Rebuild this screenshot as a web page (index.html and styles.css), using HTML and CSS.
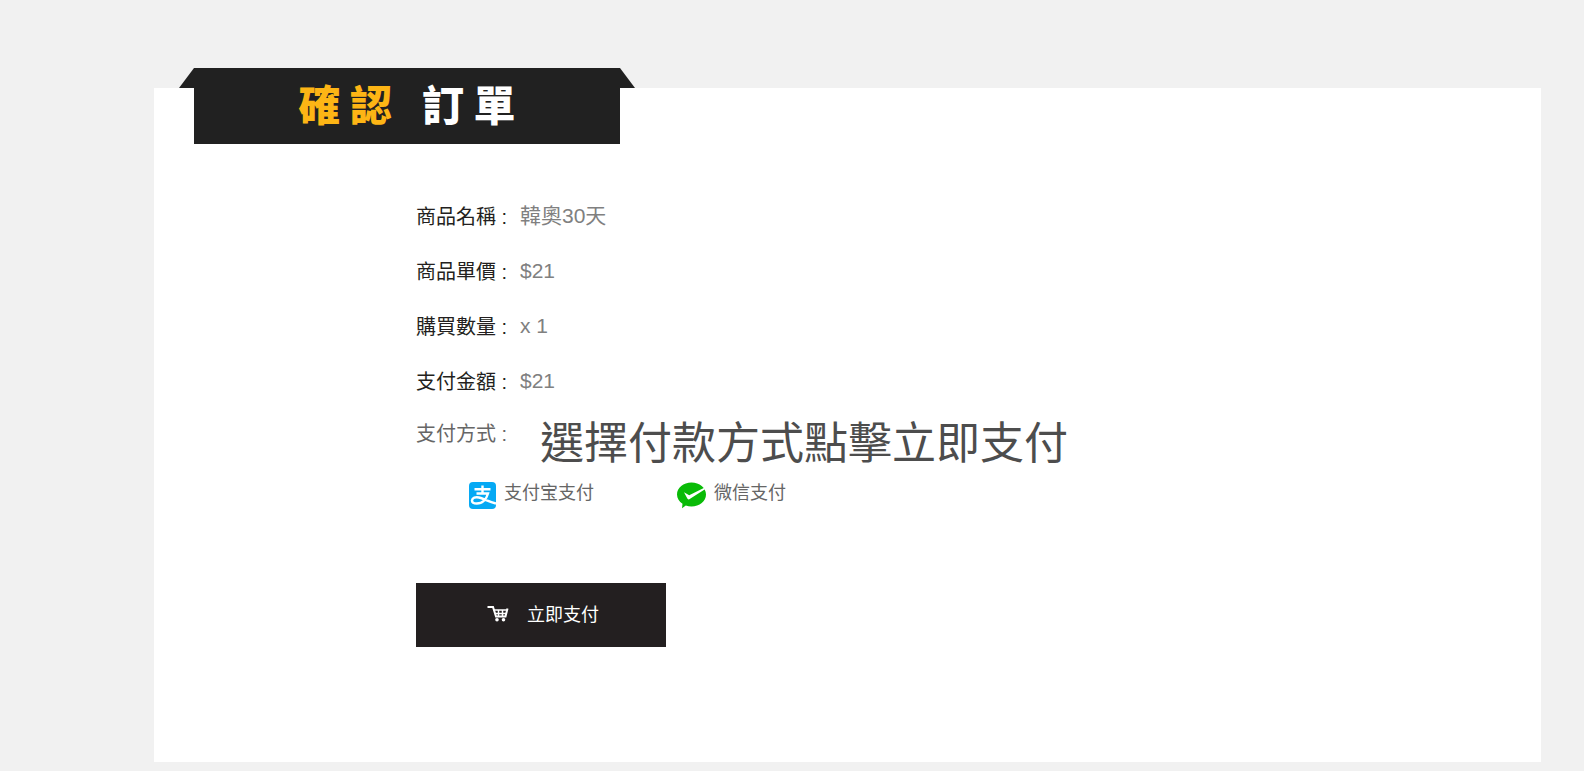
FILE: index.html
```
<!DOCTYPE html>
<html lang="zh-Hant">
<head>
    <meta charset="UTF-8">
    <meta name="viewport" content="width=device-width, initial-scale=1.0">
    <title>確認訂單</title>
    <link rel="stylesheet" href="styles.css">
</head>
<body>
    <main class="order">
        <h1 class="order_title"><span class="order_title--gold">確 認</span><span>訂 單</span></h1>

        <form class="order_form">
            <dl class="order_info">
                <div class="order_row"><dt>商品名稱 :</dt><dd>韓奧30天</dd></div>
                <div class="order_row"><dt>商品單價 :</dt><dd>$21</dd></div>
                <div class="order_row"><dt>購買數量 :</dt><dd>x 1</dd></div>
                <div class="order_row"><dt>支付金額 :</dt><dd>$21</dd></div>
            </dl>

            <div class="pay_head">
                <span class="pay_label" id="pay_label">支付方式 :</span>
                <p class="pay_tip">選擇付款方式點擊立即支付</p>
            </div>

            <div class="pay_list" role="radiogroup" aria-labelledby="pay_label">
                <label class="pay_item" for="alipay">
                    <input type="radio" name="pay" id="alipay" value="alipay">
                    <svg class="pay_icon" viewBox="0 0 27 27" aria-hidden="true">
                        <rect width="27" height="27" rx="4" fill="#06a9f4"/>
                        <path d="M5.500 7.200h16M13.500 3.500v8M7.500 11.500h11.500C17.500 17 13.500 21.500 7.800 21.500C4.500 21.500 2.800 20.300 3 18.300C3.300 15.800 6.300 14.800 10 15.500C14 16.300 19 19.300 27 21.500" fill="none" stroke="#fff" stroke-width="2.400"/>
                    </svg>
                    <span lang="zh-Hans">支付宝支付</span>
                </label>
                <label class="pay_item" for="wechat">
                    <input type="radio" name="pay" id="wechat" value="wechat">
                    <svg class="pay_icon pay_icon--wide" viewBox="0 0 29 27" aria-hidden="true">
                        <path d="M14.500 .5C22.500 .5 29 5.800 29 12.500S22.500 24.500 14.500 24.500C12.500 24.500 10.500 24.200 8.800 23.600L5 26.300L5.500 21.800C2.200 19.600 0 16.300 0 12.500C0 5.800 6.500 .5 14.500 .5z" fill="#09bb07"/>
                        <path d="M7 10.300L12.200 13.200L27.300 5.700L28 7.300L12.300 17.200Q11 17.800 10.300 16.600z" fill="#fff"/>
                    </svg>
                    <span lang="zh-Hans">微信支付</span>
                </label>
            </div>

            <button class="pay_btn" type="button">
                <svg class="pay_cart" viewBox="0 0 22 17" aria-hidden="true">
                    <path d="M.5 2h5.500l3 9.500h9.500l2-8" fill="none" stroke="#fff" stroke-width="2"/>
                    <path d="M6.500 5h14M8 8.500h12M11.500 5v6M15.500 5v6" fill="none" stroke="#fff" stroke-width="1.500"/>
                    <circle cx="10" cy="14.800" r="1.800" fill="#fff"/>
                    <circle cx="16.500" cy="14.800" r="1.800" fill="#fff"/>
                </svg>
                <span>立即支付</span>
            </button>
        </form>
    </main>
</body>
</html>
```

FILE: styles.css
```
*{
    box-sizing: border-box;
    margin: 0;
    padding: 0;
}

body{
    background-color: #f1f1f1;
    font-family: "Liberation Sans", "Noto Sans CJK TC", sans-serif;
    color: #666;
}

.order{
    display: flow-root;
    margin: 88px 43px 9px 154px;
    padding: 0 40px 115px;
    background-color: #fff;
}

.order_title{
    position: relative;
    display: flex;
    justify-content: center;
    gap: 30px;
    max-width: 426px;
    height: 76px;
    margin-top: -20px;
    background-color: #212121;
    color: #fff;
    font-family: "Noto Sans CJK TC", sans-serif;
    font-size: 42px;
    font-weight: 900;
    line-height: 70px;
}

/* folded corners of the ribbon */
.order_title::before,
.order_title::after{
    content: "";
    position: absolute;
    top: 0;
    width: 15px;
    height: 20px;
    background-color: #212121;
}

.order_title::before{
    right: 100%;
    clip-path: polygon(100% 0, 100% 100%, 0 100%);
}

.order_title::after{
    left: 100%;
    clip-path: polygon(0 0, 100% 100%, 0 100%);
}

.order_title--gold{
    color: #fdb515;
}

.order_form{
    padding: 44px 0 0 222px;
}

.order_row{
    display: flex;
    align-items: center;
    height: 55px;
}

.order_row dt,
.pay_label{
    width: 104px;
    flex-shrink: 0;
    font-size: 20px;
}

.order_row dt{
    color: #231f20;
}

.order_row dd{
    font-size: 21px;
    line-height: 24px;
    color: #808080;
}

.pay_head{
    display: flex;
    align-items: flex-start;
    height: 68px;
}

.pay_label{
    line-height: 52px;
}

.pay_tip{
    margin-left: 20px;
    font-size: 44px;
    line-height: 72px;
    color: #4d4d4d;
}

.pay_list{
    display: flex;
    gap: 83px;
    padding-left: 53px;
}

.pay_item{
    display: flex;
    align-items: center;
    gap: 8px;
    height: 38px;
    font-size: 18px;
    line-height: 20px;
    cursor: pointer;
}

.pay_item span{
    padding-bottom: 4px;
}

.pay_item input{
    position: absolute;
    opacity: 0;
}

.pay_icon{
    width: 27px;
    height: 27px;
}

.pay_icon--wide{
    width: 29px;
}

.pay_btn{
    display: flex;
    align-items: center;
    justify-content: center;
    gap: 18px;
    width: 250px;
    height: 64px;
    margin-top: 69px;
    padding: 0 0 4px 4px;
    border: none;
    background-color: #231f20;
    color: #fff;
    font-family: inherit;
    font-size: 18px;
    cursor: pointer;
}

.pay_cart{
    width: 22px;
    height: 17px;
}
```
